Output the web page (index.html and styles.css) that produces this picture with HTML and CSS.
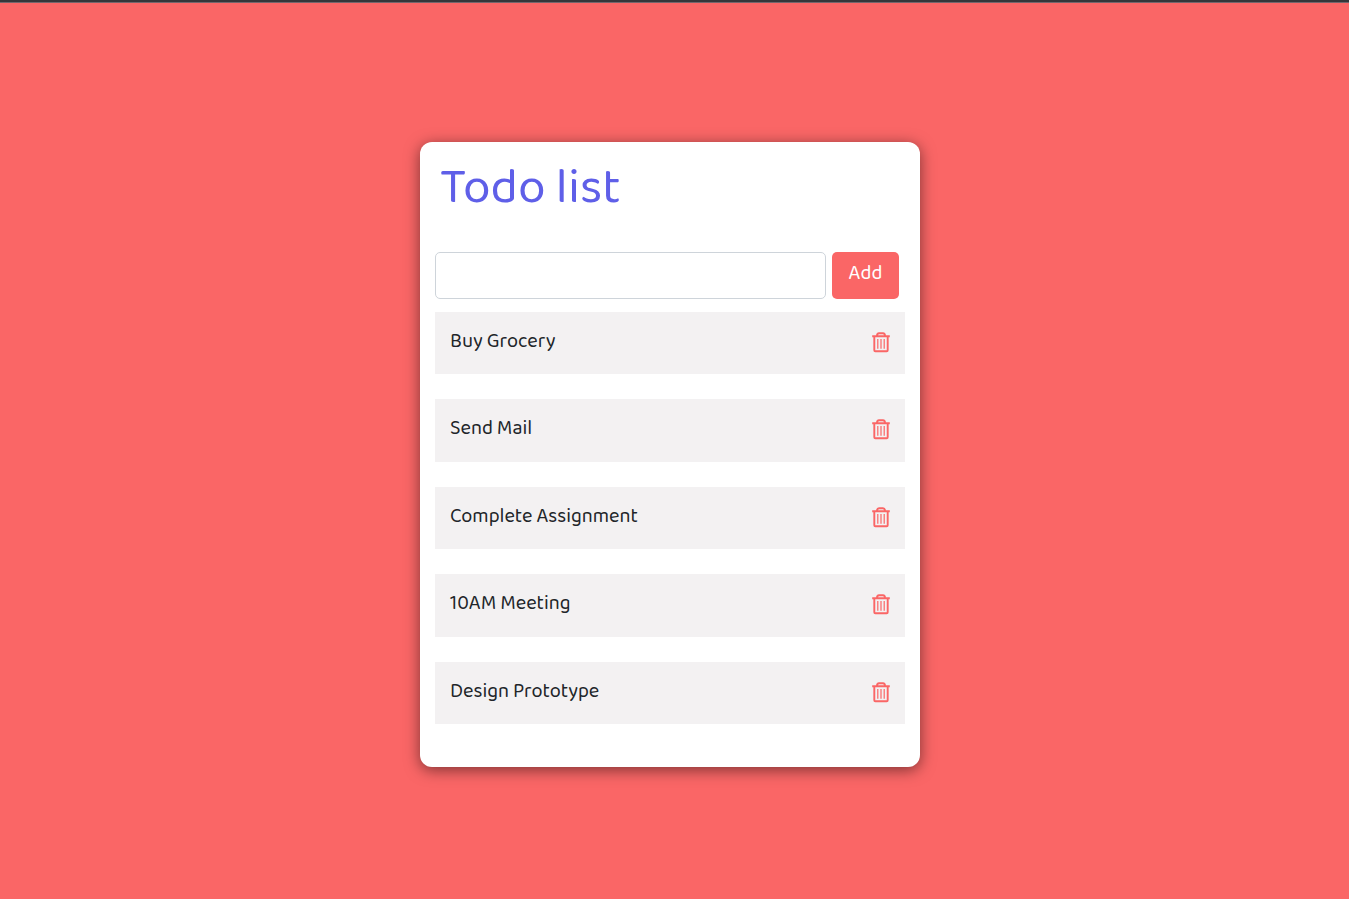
FILE: index.html
```html
<!DOCTYPE html>
<html lang="en">
<head>
<meta charset="utf-8">
<meta name="viewport" content="width=device-width, initial-scale=1">
<title>Todo list</title>
<link rel="stylesheet" href="styles.css">
</head>
<body>
<svg class="sprite" aria-hidden="true">
  <symbol id="trash" viewBox="0 0 20 22">
    <path d="M1.2 5.3h17.6M3.3 5.3v14q0 1 1 1h11.4q1 0 1-1v-14M6 5q0-2.7 2-2.7h4q2 0 2 2.7" fill="none" stroke="currentColor" stroke-width="1.9"/>
    <path d="M6.8 8v9.8M10 8v9.8M13.2 8v9.8" fill="none" stroke="currentColor" stroke-width="1.2"/>
  </symbol>
</svg>
<main class="page">
  <section class="card">
    <h1 class="title">Todo list</h1>
    <form class="entry">
      <input class="entry-field" type="text" aria-label="New task">
      <button class="add" type="button">Add</button>
    </form>
    <ul class="tasks">
      <li class="task"><span>Buy Grocery</span><button class="remove" type="button" aria-label="Delete Buy Grocery"><svg class="icon"><use href="#trash"/></svg></button></li>
      <li class="task"><span>Send Mail</span><button class="remove" type="button" aria-label="Delete Send Mail"><svg class="icon"><use href="#trash"/></svg></button></li>
      <li class="task"><span>Complete Assignment</span><button class="remove" type="button" aria-label="Delete Complete Assignment"><svg class="icon"><use href="#trash"/></svg></button></li>
      <li class="task"><span>10AM Meeting</span><button class="remove" type="button" aria-label="Delete 10AM Meeting"><svg class="icon"><use href="#trash"/></svg></button></li>
      <li class="task"><span>Design Prototype</span><button class="remove" type="button" aria-label="Delete Design Prototype"><svg class="icon"><use href="#trash"/></svg></button></li>
    </ul>
  </section>
</main>
</body>
</html>
```

FILE: styles.css
```css
* {
  box-sizing: border-box;
}

body {
  margin: 0;
  background: #fa6666;
  color: #212529;
  font-family: "Baloo 2", Lato, "Open Sans", sans-serif;
  font-size: 20px;
  line-height: 30px;
}

.sprite {
  display: none;
}

.page {
  display: flex;
  justify-content: center;
  align-items: center;
  min-height: 100vh;
  padding: 8px 9px 0 0;
  border-top: 2px solid #35363a;
  box-shadow: inset 0 1px #74666c;
}

.card {
  width: 100%;
  max-width: 500px;
  padding: 15px 15px 43px;
  border-radius: 12px;
  background: #fff;
  box-shadow: 0 3px 15px rgba(0, 0, 0, 0.5);
}

.title {
  margin: 0 0 33px;
  padding: 0 5px;
  color: #5f5fe8;
  font-size: 50px;
  font-weight: 400;
  line-height: 62px;
}

.entry {
  display: flex;
  gap: 6px;
  margin: 0 6px 13px 0;
}

.entry-field {
  flex: 1;
  min-width: 0;
  height: 47px;
  padding: 6px 12px;
  border: 1px solid #ced4da;
  border-radius: 5px;
  background: #fff;
  color: inherit;
  font: inherit;
}

.add {
  width: 67px;
  padding: 0 0 5px;
  border: 0;
  border-radius: 5px;
  background: #fa6666;
  color: #fff;
  font: inherit;
}

.tasks {
  display: grid;
  grid-auto-rows: 1fr;
  gap: 25px;
  min-height: 412px;
  margin: 0;
  padding: 0;
  list-style: none;
}

.task {
  display: flex;
  justify-content: space-between;
  align-items: flex-start;
  padding: 14px 14px 15px 15px;
  background: #f3f1f2;
}

.remove {
  display: flex;
  margin-top: 5px;
  padding: 0;
  border: 0;
  background: none;
  color: #fa6666;
}

.icon {
  width: 20px;
  height: 22px;
}
```
